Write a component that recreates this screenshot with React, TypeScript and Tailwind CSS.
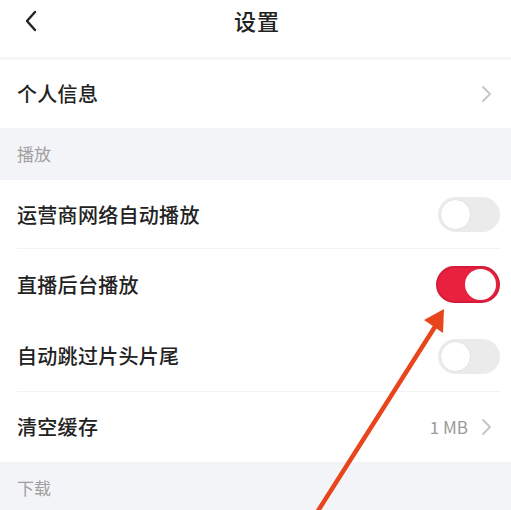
import React from "react";

const font = { fontFamily: '"Noto Sans CJK SC", "Noto Sans", sans-serif' };

function ChevronRight() {
  return (
    <svg width="12" height="18" viewBox="0 0 12 18" className="shrink-0 mr-[7px]">
      <path d="M2 2 L9 9 L2 16" fill="none" stroke="#c4c4c4" strokeWidth="1.8" strokeLinecap="round" strokeLinejoin="round" />
    </svg>
  );
}

function Toggle({ on }: { on: boolean }) {
  if (on) {
    return (
      <div className="w-[64px] h-[37px] rounded-full bg-[#e8213f] border-2 border-[#d41c38] flex items-center justify-end pr-[2px]">
        <div className="w-[31px] h-[31px] rounded-full bg-white" />
      </div>
    );
  }
  return (
    <div className="w-[62px] h-[35px] rounded-full bg-[#ebebeb] flex items-center pl-[2px]">
      <div className="w-[31px] h-[31px] rounded-full bg-white border border-[#e2e2e2]" />
    </div>
  );
}

function Row({ label, right, h, divider }: { label: string; right?: React.ReactNode; h: string; divider?: boolean }) {
  return (
    <div className={`relative flex items-center justify-between pl-[17px] pr-[11px] bg-white ${h}`}>
      <span className="text-[20px] font-medium text-[#222] tracking-[0.3px]">{label}</span>
      {right}
      {divider && <div className="absolute left-[17px] right-[11px] bottom-0 h-px bg-[#f3f3f3]" />}
    </div>
  );
}

function Section({ label, h }: { label: string; h: string }) {
  return (
    <div className={`flex items-center pl-[17px] bg-[#f3f4f8] ${h}`}>
      <span className="text-[17px] text-[#a0a0a0]">{label}</span>
    </div>
  );
}

export default function App() {
  return (
    <div className="relative w-[511px] h-[510px] overflow-hidden bg-white" style={font}>
      <div className="relative h-[57px] flex items-center justify-center">
        <svg width="14" height="22" viewBox="0 0 14 22" className="absolute left-[24px] top-[10px]">
          <path d="M11 2 L3 11 L11 20" fill="none" stroke="#222" strokeWidth="2.4" strokeLinecap="round" strokeLinejoin="round" />
        </svg>
        <span className="text-[22px] font-medium text-[#222] -mt-[16px] pl-[3px] tracking-[1px]">设置</span>
      </div>
      <div className="h-[3px] bg-[#f6f6f6]" />
      <Row label="个人信息" h="h-[68px]" right={<ChevronRight />} />
      <Section label="播放" h="h-[52px]" />
      <Row label="运营商网络自动播放" h="h-[69px]" divider right={<Toggle on={false} />} />
      <Row label="直播后台播放" h="h-[71px]" right={<Toggle on={true} />} />
      <Row label="自动跳过片头片尾" h="h-[72px]" divider right={<Toggle on={false} />} />
      <Row
        label="清空缓存"
        h="h-[70px]"
        right={
          <div className="flex items-center gap-[13px]">
            <span className="text-[17px] text-[#9a9a9a]">1 MB</span>
            <ChevronRight />
          </div>
        }
      />
      <Section label="下载" h="h-[52px]" />
      <svg className="absolute inset-0 pointer-events-none" width="511" height="510" viewBox="0 0 511 510">
        <line x1="316" y1="514" x2="438" y2="322" stroke="#e8451c" strokeWidth="4.5" strokeLinecap="round" />
        <polygon points="444,309 424,320 443,333" fill="#e8451c" />
      </svg>
    </div>
  );
}
